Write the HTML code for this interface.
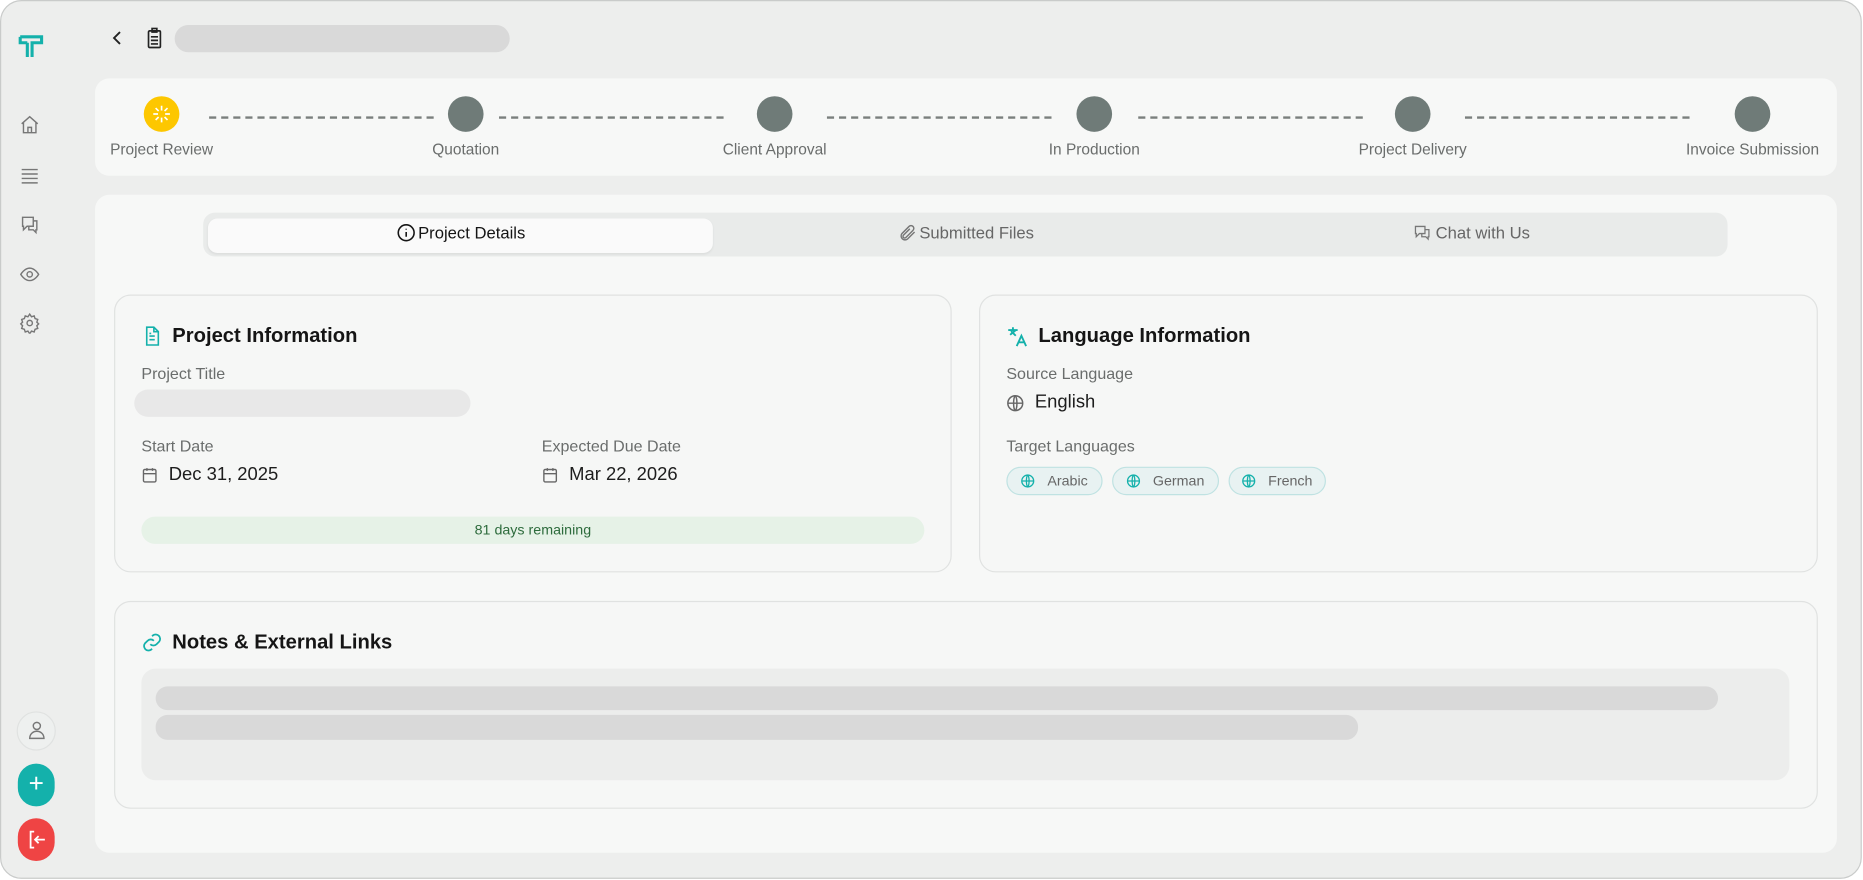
<!DOCTYPE html>
<html><head><meta charset="utf-8"><style>
*{box-sizing:border-box;margin:0;padding:0}
html,body{width:1863px;height:880px;overflow:hidden;background:#fff;font-family:"Liberation Sans",sans-serif}
#w{position:absolute;left:0;top:0;width:1568px;height:741px;transform:scale(1.18814,1.1876);transform-origin:0 0}
.frame{position:absolute;left:0;top:0;width:1567px;height:740px;background:#edeeed;border:1px solid #c9cbca;border-radius:18px}
.a{position:absolute}
.card{position:absolute;background:#f7f8f7;border-radius:12px}
.box{position:absolute;border:1px solid #e0e2e1;border-radius:14px;background:#f6f7f6}
.dot{position:absolute;width:30px;height:30px;border-radius:50%;background:#6f7b78;top:81px}
.lbl{position:absolute;top:118px;font-size:13px;color:#6a6d6c;transform:translateX(-50%);white-space:nowrap}
.dash{position:absolute;top:98px;height:0;border-top:2px dashed #7a7f7d}
.tab{position:absolute;top:188px;font-size:14px;color:#666;display:flex;align-items:center;gap:2px;transform:translateX(-50%);white-space:nowrap}
.h{position:absolute;font-size:17px;font-weight:bold;color:#151515;display:flex;align-items:center;gap:8px}
.l{position:absolute;font-size:13.5px;color:#6a6d6c}
.v{position:absolute;font-size:15.5px;color:#1d1d1d;display:flex;align-items:center;gap:9px}
.chip{position:absolute;top:393px;height:24px;border:1px solid #bfe2e2;background:#e8f2f2;border-radius:12px;font-size:12px;color:#666;display:flex;align-items:center;justify-content:center;gap:10px}
svg{display:block}
</style></head><body><div id="w">
<div class="frame"></div>
<!-- sidebar -->
<svg class="a" style="left:15px;top:28px" width="24" height="22" viewBox="0 0 24 22" fill="none" stroke="#14b1ab" stroke-width="2.6"><path d="M2 3h18v5h-8v12M8 8v12M2 3v5h6"/></svg>
<svg class="a" style="left:16px;top:96px" width="18" height="18" viewBox="0 0 24 24" fill="none" stroke="#777" stroke-width="1.6"><path d="M3 11l9-8 9 8M5 9v12h14V9M10 21v-6h4v6"/></svg>
<svg class="a" style="left:16px;top:139px" width="18" height="18" viewBox="0 0 24 24" fill="none" stroke="#777" stroke-width="1.6"><path d="M3 5h18M3 10h18M3 15h18M3 20h18"/></svg>
<svg class="a" style="left:16px;top:180px" width="18" height="18" viewBox="0 0 24 24" fill="none" stroke="#777" stroke-width="1.6"><path d="M4 4h12v10H9l-4 4v-4H4zM16 8h4v10h-1v3l-3-3h-5v-4"/></svg>
<svg class="a" style="left:16px;top:222px" width="18" height="18" viewBox="0 0 24 24" fill="none" stroke="#777" stroke-width="1.6"><path d="M2 12s4-7 10-7 10 7 10 7-4 7-10 7S2 12 2 12z"/><circle cx="12" cy="12" r="3"/></svg>
<svg class="a" style="left:16px;top:263px" width="18" height="18" viewBox="0 0 24 24" fill="none" stroke="#777" stroke-width="1.6"><circle cx="12" cy="12" r="3"/><path d="M12 2l2 3 3-1 1 3 3 1-1 3 2 2-2 2 1 3-3 1-1 3-3-1-2 3-2-3-3 1-1-3-3-1 1-3-2-2 2-2-1-3 3-1 1-3 3 1z"/></svg>
<div class="a" style="left:14px;top:599px;width:33px;height:33px;border-radius:50%;border:1px solid #e0e2e1;background:#eef0ef"></div>
<svg class="a" style="left:22px;top:606px" width="18" height="18" viewBox="0 0 24 24" fill="none" stroke="#777" stroke-width="1.6"><circle cx="12" cy="7" r="4"/><path d="M4 21c0-5 4-8 8-8s8 3 8 8z"/></svg>
<div class="a" style="left:15px;top:643px;width:31px;height:36px;border-radius:16px;background:#14b1ab"></div>
<div class="a" style="left:15px;top:641px;width:31px;height:38px;color:#fff;font-size:22px;text-align:center;line-height:38px">+</div>
<div class="a" style="left:15px;top:689px;width:31px;height:36px;border-radius:16px;background:#ef4444"></div>
<svg class="a" style="left:22px;top:698px" width="18" height="18" viewBox="0 0 24 24" fill="none" stroke="#fff" stroke-width="2"><path d="M9 3H5v18h4M10 12h11M14 8l-4 4 4 4"/></svg>
<!-- header -->
<svg class="a" style="left:93px;top:25px" width="12" height="14" viewBox="0 0 12 14" fill="none" stroke="#222" stroke-width="1.6"><path d="M8 2L3 7l5 5"/></svg>
<svg class="a" style="left:122px;top:23px" width="16" height="18" viewBox="0 0 16 18" fill="none" stroke="#222" stroke-width="1.4"><rect x="3" y="3" width="10" height="14" rx="1"/><rect x="6" y="1" width="4" height="3"/><path d="M5 8h6M5 11h6M5 14h6"/></svg>
<div class="a" style="left:147px;top:21px;width:282px;height:23px;border-radius:12px;background:#d9d9d9"></div>
<!-- stepper -->
<div class="card" style="left:80px;top:66px;width:1466px;height:82px"></div>
<div class="dot" style="left:121px;background:#fdc700"></div>
<svg class="a" style="left:126px;top:86px" width="20" height="20" viewBox="0 0 20 20" stroke="#fff" stroke-width="1.4"><path d="M10 3v4M10 13v4M3 10h4M13 10h4M5 5l2.5 2.5M12.5 12.5L15 15M15 5l-2.5 2.5M7.5 12.5L5 15"/></svg>
<div class="dot" style="left:377px"></div><div class="dot" style="left:637px"></div><div class="dot" style="left:906px"></div><div class="dot" style="left:1174px"></div><div class="dot" style="left:1460px"></div>
<div class="dash" style="left:176px;width:189px"></div><div class="dash" style="left:420px;width:189px"></div><div class="dash" style="left:696px;width:189px"></div><div class="dash" style="left:958px;width:189px"></div><div class="dash" style="left:1233px;width:189px"></div>
<div class="lbl" style="left:136px">Project Review</div><div class="lbl" style="left:392px">Quotation</div><div class="lbl" style="left:652px">Client Approval</div><div class="lbl" style="left:921px">In Production</div><div class="lbl" style="left:1189px">Project Delivery</div><div class="lbl" style="left:1475px">Invoice Submission</div>
<!-- main -->
<div class="card" style="left:80px;top:164px;width:1466px;height:554px"></div>
<div class="a" style="left:171px;top:179px;width:1283px;height:37px;border-radius:10px;background:#e9ebea"></div>
<div class="a" style="left:175px;top:184px;width:425px;height:29px;border-radius:8px;background:#fafafa;box-shadow:0 1px 2px rgba(0,0,0,.06)"></div>
<div class="tab" style="left:388px;color:#151515"><svg width="16" height="16" viewBox="0 0 24 24" fill="none" stroke="#151515" stroke-width="2"><circle cx="12" cy="12" r="10"/><path d="M12 11v6M12 7v1"/></svg>Project Details</div>
<div class="tab" style="left:813px"><svg width="16" height="16" viewBox="0 0 24 24" fill="none" stroke="#777" stroke-width="1.8"><path d="M21 11l-9 9a5 5 0 01-7-7l9-9a3.5 3.5 0 015 5l-9 9a2 2 0 01-3-3l8-8"/></svg>Submitted Files</div>
<div class="tab" style="left:1238px"><svg width="18" height="16" viewBox="0 0 24 24" fill="none" stroke="#777" stroke-width="1.6"><path d="M3 4h12v9H8l-4 4v-4H3zM15 8h5v9h-1v3l-3-3h-5v-4"/></svg>Chat with Us</div>
<!-- project info -->
<div class="box" style="left:96px;top:248px;width:705px;height:234px"></div>
<div class="h" style="left:119px;top:273px"><svg width="18" height="18" viewBox="0 0 24 24" fill="none" stroke="#14b1ab" stroke-width="1.8"><path d="M14 2H6v20h13V7zM14 2v5h5M9 12h6M9 16h6M9 9h2"/></svg>Project Information</div>
<div class="l" style="left:119px;top:307px">Project Title</div>
<div class="a" style="left:113px;top:328px;width:283px;height:23px;border-radius:12px;background:#e8e8e8"></div>
<div class="l" style="left:119px;top:368px">Start Date</div>
<div class="v" style="left:119px;top:391px"><svg width="14" height="14" viewBox="0 0 24 24" fill="none" stroke="#666" stroke-width="2"><rect x="3" y="4" width="18" height="18" rx="2"/><path d="M3 10h18M8 2v4M16 2v4"/></svg>Dec 31, 2025</div>
<div class="l" style="left:456px;top:368px">Expected Due Date</div>
<div class="v" style="left:456px;top:391px"><svg width="14" height="14" viewBox="0 0 24 24" fill="none" stroke="#666" stroke-width="2"><rect x="3" y="4" width="18" height="18" rx="2"/><path d="M3 10h18M8 2v4M16 2v4"/></svg>Mar 22, 2026</div>
<div class="a" style="left:119px;top:435px;width:659px;height:23px;border-radius:12px;background:#e6f2e7;font-size:12px;color:#2d6b3c;text-align:center;line-height:23px">81 days remaining</div>
<!-- language -->
<div class="box" style="left:824px;top:248px;width:706px;height:234px"></div>
<div class="h" style="left:847px;top:273px"><svg width="19" height="19" viewBox="0 0 24 24" fill="none" stroke="#14b1ab" stroke-width="2"><path d="M2 5h10M7 2v3M4 10l6-5M5 6l5 5M11 22l5-11 5 11M13 18h6"/></svg>Language Information</div>
<div class="l" style="left:847px;top:307px">Source Language</div>
<div class="v" style="left:847px;top:330px"><svg width="15" height="15" viewBox="0 0 24 24" fill="none" stroke="#666" stroke-width="2"><circle cx="12" cy="12" r="10"/><path d="M2 12h20M12 2c3 3 3 17 0 20M12 2c-3 3-3 17 0 20"/></svg>English</div>
<div class="l" style="left:847px;top:368px">Target Languages</div>
<div class="chip" style="left:847px;width:81px"><svg width="12" height="12" viewBox="0 0 24 24" fill="none" stroke="#14b1ab" stroke-width="2.2"><circle cx="12" cy="12" r="10"/><path d="M2 12h20M12 2c3 3 3 17 0 20M12 2c-3 3-3 17 0 20"/></svg>Arabic</div>
<div class="chip" style="left:936px;width:90px"><svg width="12" height="12" viewBox="0 0 24 24" fill="none" stroke="#14b1ab" stroke-width="2.2"><circle cx="12" cy="12" r="10"/><path d="M2 12h20M12 2c3 3 3 17 0 20M12 2c-3 3-3 17 0 20"/></svg>German</div>
<div class="chip" style="left:1034px;width:82px"><svg width="12" height="12" viewBox="0 0 24 24" fill="none" stroke="#14b1ab" stroke-width="2.2"><circle cx="12" cy="12" r="10"/><path d="M2 12h20M12 2c3 3 3 17 0 20M12 2c-3 3-3 17 0 20"/></svg>French</div>
<!-- notes -->
<div class="box" style="left:96px;top:506px;width:1434px;height:175px"></div>
<div class="h" style="left:119px;top:531px"><svg width="18" height="18" viewBox="0 0 24 24" fill="none" stroke="#14b1ab" stroke-width="2"><path d="M10 14a5 5 0 007 0l3-3a5 5 0 00-7-7l-1 1M14 10a5 5 0 00-7 0l-3 3a5 5 0 007 7l1-1"/></svg>Notes &amp; External Links</div>
<div class="a" style="left:119px;top:563px;width:1387px;height:94px;border-radius:12px;background:#ecedec"></div>
<div class="a" style="left:131px;top:578px;width:1315px;height:20px;border-radius:10px;background:#d9d9d9"></div>
<div class="a" style="left:131px;top:602px;width:1012px;height:21px;border-radius:10px;background:#d9d9d9"></div>
</div></body></html>
